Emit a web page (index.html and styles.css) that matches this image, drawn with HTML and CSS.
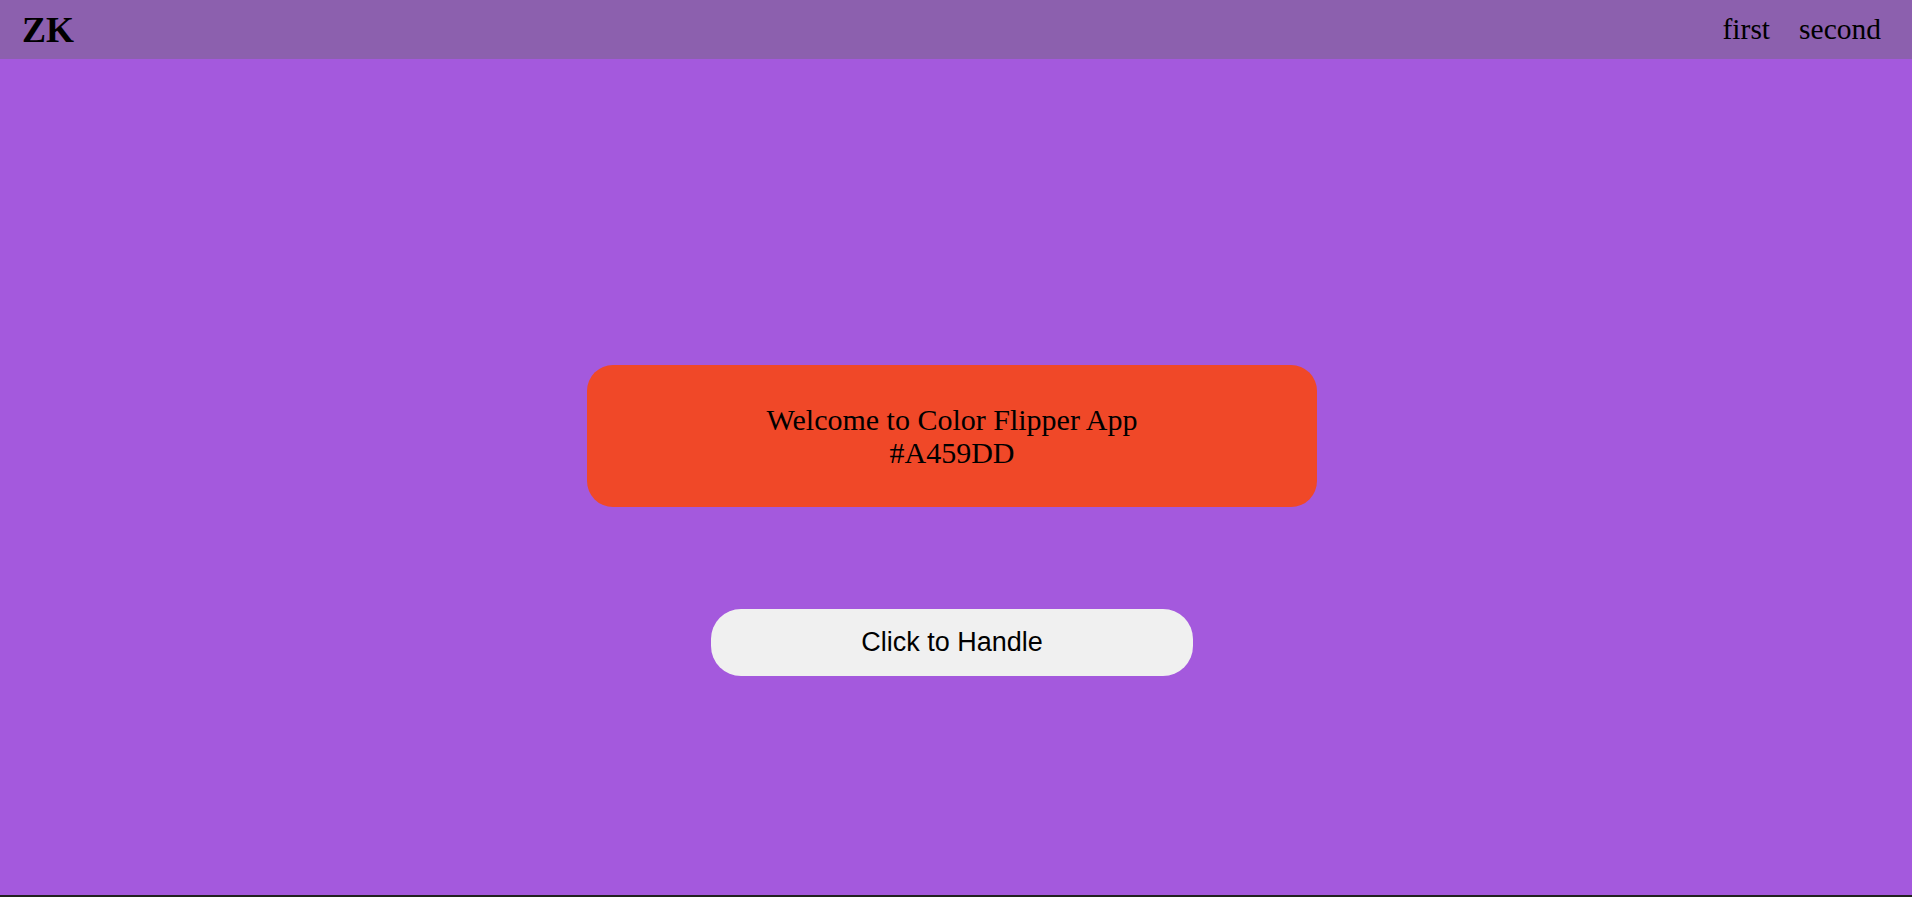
FILE: index.html
```html
<!DOCTYPE html>
<html lang="en">
<head>
<meta charset="utf-8">
<title>Color Flipper</title>
<link rel="stylesheet" href="styles.css">
</head>
<body>
<div class="page">
  <header class="topbar">
    <div class="logo">ZK</div>
    <nav class="nav">
      <span class="nav-item">first</span>
      <span class="nav-item">second</span>
    </nav>
  </header>
  <main class="main">
    <div class="card">
      <div>Welcome to Color Flipper App</div>
      <div>#A459DD</div>
    </div>
    <button class="btn" type="button">Click to Handle</button>
  </main>
</div>
</body>
</html>
```

FILE: styles.css
```css
html, body {
  margin: 0;
  padding: 0;
  height: 100%;
}
body {
  background: #222222;
  font-family: "Liberation Serif", "Times New Roman", serif;
  color: #000;
}
.page {
  height: 895px;
  background: #A459DD;
  display: flex;
  flex-direction: column;
}
.topbar {
  height: 59px;
  background: #8C60AE;
  display: flex;
  align-items: center;
  justify-content: space-between;
  padding: 0 31px 0 22px;
  flex-shrink: 0;
}
.logo {
  font-size: 36px;
  font-weight: bold;
  line-height: 1;
}
.nav {
  display: flex;
  gap: 29px;
  font-size: 29.5px;
  line-height: 1;
}
.main {
  display: flex;
  flex-direction: column;
  align-items: center;
  padding-right: 8px;
}
.card {
  margin-top: 306px;
  width: 730px;
  height: 142px;
  box-sizing: border-box;
  background: #F04828;
  border-radius: 26px;
  display: flex;
  flex-direction: column;
  justify-content: center;
  align-items: center;
  font-size: 30px;
  line-height: 33px;
  text-align: center;
}
.btn {
  margin-top: 102px;
  width: 482px;
  height: 67px;
  border: none;
  border-radius: 30px;
  background: #F0F0F0;
  font-family: "Liberation Sans", Arial, sans-serif;
  font-size: 27px;
  color: #000;
  padding: 0;
}
```
